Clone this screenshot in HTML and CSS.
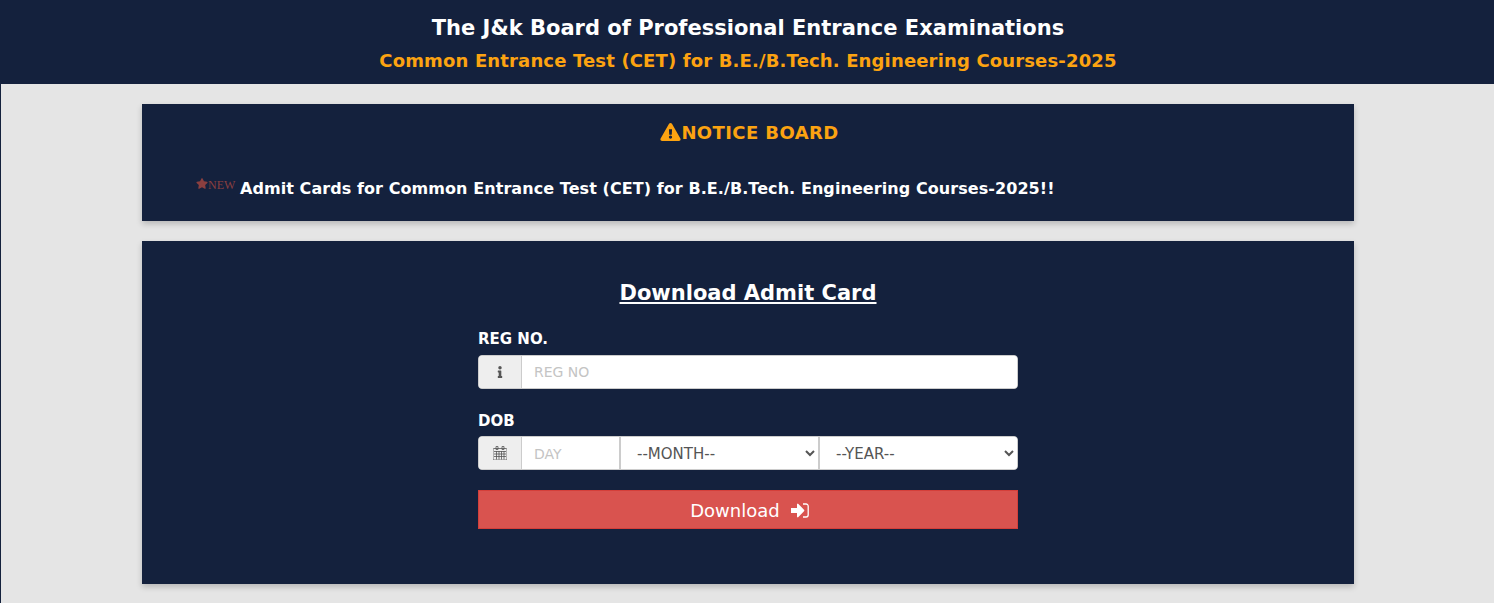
FILE: index.html
```html
<!DOCTYPE html>
<html lang="en">
<head>
    <meta charset="UTF-8">
    <meta name="viewport" content="width=device-width, initial-scale=1.0">
    <title>Download Admit Card</title>
    <link rel="stylesheet" href="styles.css">
</head>
<body>

<header class="site-header">
    <h1>The J&amp;k Board of Professional Entrance Examinations</h1>
    <h2>Common Entrance Test (CET) for B.E./B.Tech. Engineering Courses-2025</h2>
</header>

<main class="page">
    <section class="card notice">
        <h3 class="notice-title">
            <svg class="notice-icon" viewBox="0 0 576 512"><path fill-rule="evenodd" d="M569.5 440L329.6 24c-18.400-32-64.800-32-83.200 0L6.500 440c-18.400 31.900 4.600 72 41.600 72h479.800c36.900 0 60-40 41.600-72zM288 354c25.400 0 46 20.600 46 46s-20.600 46-46 46-46-20.600-46-46 20.600-46 46-46zm-43.700-165.300l7.400 136c.3 6.400 5.600 11.300 12 11.300h48.500c6.400 0 11.600-5 12-11.300l7.400-136c.4-6.900-5.100-12.700-12-12.700h-63.400c-6.900 0-12.300 5.800-11.900 12.700z"/></svg>NOTICE BOARD
        </h3>
        <p class="notice-line">
            <span class="new-badge"><svg class="star" viewBox="0 0 576 512"><path d="M259.300 17.800L194 150.200 47.900 171.500c-26.200 3.800-36.700 36.100-17.700 54.600l105.700 103-25 145.500c-4.500 26.300 23.200 46 46.400 33.700L288 439.600l130.700 68.700c23.200 12.200 50.900-7.400 46.400-33.700l-25-145.500 105.700-103c19-18.500 8.500-50.800-17.700-54.600L382 150.200 316.700 17.800c-11.700-23.600-45.600-23.900-57.400 0z"/></svg>NEW</span>
            Admit Cards for Common Entrance Test (CET) for B.E./B.Tech. Engineering Courses-2025!!
        </p>
    </section>

    <section class="card download">
        <h3 class="download-title">Download Admit Card</h3>
        <form class="admit-form">
            <label class="field-label" for="regno">REG NO.</label>
            <div class="input-group">
                <span class="addon">
                    <svg class="addon-icon info" viewBox="0 0 192 512"><path d="M20 424.200h20V279.800H20c-11 0-20-9-20-20V212c0-11 9-20 20-20h112c11 0 20 9 20 20v212.200h20c11 0 20 9 20 20V492c0 11-9 20-20 20H20c-11 0-20-9-20-20v-47.800c0-11 9-20 20-20zM96 0C56.200 0 24 32.200 24 72s32.200 72 72 72 72-32.200 72-72S135.800 0 96 0z"/></svg>
                </span>
                <input class="control grow" id="regno" type="text" placeholder="REG NO">
            </div>

            <label class="field-label dob-label" for="day">DOB</label>
            <div class="input-group">
                <span class="addon">
                    <svg class="calendar-icon" viewBox="0 0 14 14"><path d="M1 2.500h12a1 1 0 0 1 1 1V13a1 1 0 0 1-1 1H1a1 1 0 0 1-1-1V3.500a1 1 0 0 1 1-1zM3 .5h2v3H3zM9 .5h2v3H9z"/><path class="calendar-grid" d="M1 5.500h12M1 8h12M1 10.500h12M3.500 5v8.500M6 5v8.500M8.500 5v8.500M11 5v8.500"/></svg>
                </span>
                <input class="control day" id="day" type="text" placeholder="DAY">
                <select class="control month">
                    <option>--MONTH--</option>
                </select>
                <select class="control year">
                    <option>--YEAR--</option>
                </select>
            </div>

            <button class="download-btn" type="button">Download
                <svg class="btn-icon" viewBox="0 0 18 15"><path d="M0 5h6V1.500a.8.8 0 0 1 1.400-.6L13 6.800a1 1 0 0 1 0 1.400l-5.600 5.900a.8.8 0 0 1-1.400-.6V10H0z"/><path class="btn-bracket" d="M12 1h3a2.200 2.200 0 0 1 2.200 2.200v8.600A2.200 2.200 0 0 1 15 14h-3"/></svg>
            </button>
        </form>
    </section>
</main>

</body>
</html>
```

FILE: styles.css
```css
* {
    box-sizing: border-box;
}

body {
    margin: 0;
    min-height: 100vh;
    background-color: #e5e5e5;
    border-left: 1px solid #14213d;
    font-family: "DejaVu Sans", Verdana, sans-serif;
}

.site-header {
    height: 84px;
    margin-left: -1px;
    padding: 15px 0 0 2px;
    background-color: #14213d;
    text-align: center;
}

.site-header h1 {
    margin: 0;
    font-size: 21px;
    line-height: 26px;
    color: #fff;
}

.site-header h2 {
    margin: 8px 0 0;
    font-size: 18px;
    line-height: 24px;
    letter-spacing: 0.15px;
    color: #fca311;
}

.page {
    display: flex;
    flex-direction: column;
    gap: 20px;
    width: 1212px;
    margin: 20px 0 0 141px;
}

.card {
    background-color: #14213d;
    box-shadow: 0 3px 6px rgba(0, 0, 0, 0.2);
}

.notice {
    height: 117px;
    padding: 17px 55px 0 54px;
}

.notice-title {
    display: flex;
    justify-content: center;
    align-items: center;
    margin: 0;
    padding-left: 4px;
    font-size: 18px;
    line-height: 24px;
    letter-spacing: 0.4px;
    color: #fca311;
}

.notice-icon {
    width: 21px;
    height: 18px;
    margin-top: -2px;
    fill: #fca311;
}

.notice-line {
    margin: 32px 0 0;
    font-size: 16px;
    font-weight: bold;
    line-height: 24px;
    letter-spacing: 0.07px;
    color: #fff;
}

.new-badge {
    position: relative;
    top: -5px;
    margin-right: -1px;
    font-family: "Liberation Serif", serif;
    font-size: 12px;
    font-weight: normal;
    letter-spacing: 0;
    color: #8a3f3f;
}

.star {
    width: 12px;
    height: 11px;
    fill: #8a3f3f;
}

.download {
    height: 343px;
    padding-top: 38px;
}

.download-title {
    margin: 0;
    font-size: 21px;
    line-height: 28px;
    text-align: center;
    text-decoration: underline;
    color: #fff;
}

.admit-form {
    display: flex;
    flex-direction: column;
    width: 540px;
    margin: 22px auto 0;
}

.field-label {
    margin-bottom: 6px;
    font-size: 15px;
    font-weight: bold;
    line-height: 20px;
    color: #fff;
}

.dob-label {
    margin-top: 22px;
    margin-bottom: 5px;
}

.input-group {
    display: flex;
    height: 34px;
    border: 1px solid #ccc;
    border-radius: 4px;
    overflow: hidden;
    background-color: #fff;
}

.addon {
    display: flex;
    justify-content: center;
    align-items: center;
    width: 43px;
    flex-shrink: 0;
    background-color: #eee;
    border-right: 1px solid #ccc;
}

.addon-icon {
    fill: #555;
}

.addon-icon.info {
    width: 6px;
    height: 12px;
}

.calendar-icon {
    width: 14px;
    height: 14px;
    fill: #eee;
    stroke: #555;
    stroke-width: 0.8;
}

.calendar-grid {
    fill: none;
}

.control {
    height: 100%;
    border: 0;
    border-radius: 0;
    outline: 0;
    padding: 0 12px;
    background-color: #fff;
    font-family: "DejaVu Sans", Verdana, sans-serif;
    font-size: 14px;
    color: #555;
}

.control::placeholder {
    color: #c4c4c4;
}

.grow {
    flex: 1;
}

.day {
    width: 99px;
    padding-top: 2px;
    border-right: 2px solid #ccc;
}

.month {
    width: 199px;
    padding-top: 2px;
    border-right: 2px solid #ccc;
    font-size: 15px;
}

.year {
    flex: 1;
    min-width: 0;
    padding-top: 2px;
    font-size: 15px;
}

.download-btn {
    display: flex;
    justify-content: center;
    align-items: center;
    gap: 11px;
    height: 39px;
    margin-top: 20px;
    padding: 2px 0 0 3px;
    background-color: #d9534f;
    border: 1px solid #d43f3a;
    font-family: "DejaVu Sans", Verdana, sans-serif;
    font-size: 18px;
    color: #fff;
}

.btn-icon {
    width: 18px;
    height: 15px;
    fill: #fff;
}

.btn-bracket {
    fill: none;
    stroke: #fff;
    stroke-width: 1.3;
}
```
